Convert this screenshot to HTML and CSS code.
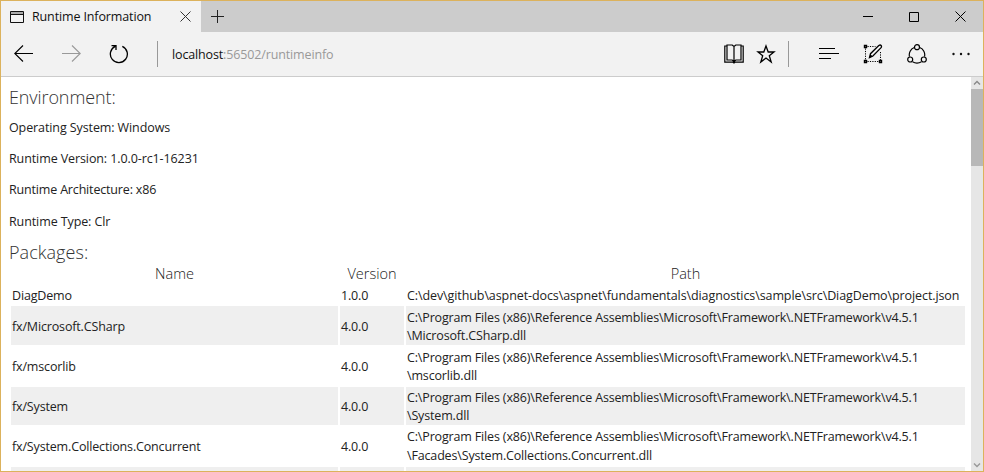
FILE: index.html
```html
<!DOCTYPE html>
<html lang="en">
<head>
<meta charset="utf-8">
<title>Runtime Information</title>
<link rel="stylesheet" href="styles.css">
</head>
<body>
<div class="window">
  <header class="titlebar">
    <div class="tab">
      <svg class="page-icon" width="14" height="12" viewBox="0 0 14 12"><path d="M1 1h12v2H1z" fill="#aaa"/><path d="M.5 .5h13v11H.5zM.5 3.5h13" fill="none" stroke="#111"/></svg>
      <span class="tab-title">Runtime Information</span>
      <svg class="tab-close" width="11" height="11" viewBox="0 0 11 11"><path d="M.5.5l10 10M10.5.5l-10 10" stroke="#333" stroke-width="1"/></svg>
    </div>
    <svg class="new-tab" width="13" height="13" viewBox="0 0 13 13"><path d="M6.5 0v13M0 6.5h13" stroke="#222"/></svg>
    <div class="controls">
      <svg width="10" height="11" viewBox="0 0 10 11"><path d="M0 5.5h10" stroke="#000"/></svg>
      <svg width="10" height="10" viewBox="0 0 10 10"><path d="M.5.5h9v9h-9z" fill="none" stroke="#000"/></svg>
      <svg width="11" height="11" viewBox="0 0 11 11"><path d="M.5.5l10 10M10.5.5l-10 10" stroke="#000" stroke-width="1"/></svg>
    </div>
  </header>
  <nav class="toolbar">
    <svg class="back" width="19" height="18" viewBox="0 0 19 18"><path d="M9 .5L.8 8.500 9 16.500M.8 8.500H19" fill="none" stroke="#000" stroke-width="1.1"/></svg>
    <svg class="forward" width="19" height="18" viewBox="0 0 19 18"><path d="M10 .5l8.200 8L10 16.500M18.200 8.500H0" fill="none" stroke="#999" stroke-width="1.1"/></svg>
    <svg class="reload" width="20" height="20" viewBox="0 0 20 20"><path d="M13.300 2.300A8.500 8.500 0 1 1 6.200 2.400M2.500 1.600H7v4.500" fill="none" stroke="#000" stroke-width="1.3"/></svg>
    <i class="rule"></i>
    <span class="address">localhost<span class="rest">:56502/runtimeinfo</span></span>
    <div class="tools">
      <svg class="book" width="20" height="20" viewBox="0 0 20 20"><path d="M3 2H.8v16.200H9l1 .8 1-.8h8.200V2H17M3 16V1h5.200L10 2.500 11.800 1H17v15h-5.200L10 17.500 8.200 16zM10 2.500v15" fill="none" stroke="#000" stroke-width="1.2"/></svg>
      <svg class="star" width="20" height="20" viewBox="0 0 20 20"><path d="M10 2l2.200 6H18l-4.700 3.700 1.900 6.300-5.200-3.900L4.800 18l1.900-6.300L2 8h5.800z" fill="none" stroke="#000" stroke-width="1.3"/></svg>
      <i class="rule"></i>
      <svg class="hub" width="20" height="12" viewBox="0 0 20 12"><path d="M0 .5h16M0 5.500h20M0 10.500h12" stroke="#000" stroke-width="1"/></svg>
      <svg class="note" width="20" height="20" viewBox="0 0 20 20"><path d="M4.500 2.500h8M2.500 4.500v12M4.500 17.500h12M17.500 8v8" fill="none" stroke="#000" stroke-width="1" stroke-dasharray="1.200 1.200"/><path d="M1.500 1.500h2v2h-2zM1.500 16.500h2v2h-2zM16.500 16.500h2v2h-2z" fill="none" stroke="#000" stroke-width="1.400"/><path d="M6.500 13.500l1-3.800L15.800 1.500q1.500-1 2.300 0t0 2.200L9.900 12z" fill="#f2f2f2" stroke="#000" stroke-width="1.300"/><path d="M6.300 13.700l1-3.500 2.500 2.300z"/></svg>
      <svg class="share" width="20" height="20" viewBox="0 0 20 20"><g fill="none" stroke="#000" stroke-width="1.200"><path d="M7.300 3.500A7.800 7.800 0 0 0 2.500 12.700M12.700 3.500a7.800 7.800 0 0 1 4.800 9.200M5.500 17.700q4.500 2.700 9 0"/><circle cx="10" cy="3.200" r="2.500"/><circle cx="3.200" cy="15.500" r="2.500"/><circle cx="16.800" cy="15.500" r="2.500"/></g></svg>
      <svg class="more" width="18" height="4" viewBox="0 0 18 4"><g fill="#111"><circle cx="1.500" cy="2" r="1.200"/><circle cx="9" cy="2" r="1.200"/><circle cx="16.500" cy="2" r="1.200"/></g></svg>
    </div>
  </nav>
  <div class="view">
    <main class="page">
      <h2>Environment:</h2>
      <p>Operating System: Windows</p>
      <p>Runtime Version: 1.0.0-rc1-16231</p>
      <p class="arch">Runtime Architecture: x86</p>
      <p class="type">Runtime Type: Clr</p>
      <h2 class="packages">Packages:</h2>
      <table>
        <colgroup><col class="c-name"><col class="c-version"><col class="c-path"></colgroup>
        <thead><tr><th>Name</th><th>Version</th><th>Path</th></tr></thead>
        <tbody>
          <tr class="single"><td>DiagDemo</td><td>1.0.0</td><td class="long">C:\dev\github\aspnet-docs\aspnet\fundamentals\diagnostics\sample\src\DiagDemo\project.json</td></tr>
          <tr class="first"><td>fx/Microsoft.CSharp</td><td>4.0.0</td><td>C:\Program Files (x86)\Reference Assemblies\Microsoft\Framework\.NETFramework\v4.5.1<br>\Microsoft.CSharp.dll</td></tr>
          <tr><td>fx/mscorlib</td><td>4.0.0</td><td>C:\Program Files (x86)\Reference Assemblies\Microsoft\Framework\.NETFramework\v4.5.1<br>\mscorlib.dll</td></tr>
          <tr><td>fx/System</td><td>4.0.0</td><td>C:\Program Files (x86)\Reference Assemblies\Microsoft\Framework\.NETFramework\v4.5.1<br>\System.dll</td></tr>
          <tr class="spaced"><td>fx/System.Collections.Concurrent</td><td>4.0.0</td><td>C:\Program Files (x86)\Reference Assemblies\Microsoft\Framework\.NETFramework\v4.5.1<br>\Facades\System.Collections.Concurrent.dll</td></tr>
          <tr><td></td><td></td><td></td></tr>
        </tbody>
      </table>
    </main>
    <div class="scrollbar">
      <svg width="12" height="12" viewBox="0 0 12 12"><path d="M3 7.500l3-3 3 3" fill="none" stroke="#888" stroke-width="1.400"/></svg>
      <div class="thumb"></div>
      <svg class="down" width="12" height="12" viewBox="0 0 12 12"><path d="M3 4.500l3 3 3-3" fill="none" stroke="#999" stroke-width="1.400"/></svg>
    </div>
  </div>
</div>
</body>
</html>
```
FILE: styles.css
```css
* { box-sizing: border-box; }
body { margin: 0; overflow: hidden; font-family: "Open Sans", "Noto Sans", sans-serif; font-size: 12.5px; color: #222; }
svg { display: block; flex: none; }
.window { width: 984px; height: 472px; border: 1px solid #dcb25c; display: flex; flex-direction: column; background: #fff; }
.titlebar { height: 31px; flex: none; background: #ccc; display: flex; align-items: center; }
.tab { width: 200px; height: 31px; background: #f2f2f2; display: flex; align-items: center; padding: 0 10px 0 9px; }
.tab-title { margin-left: 8px; flex: 1; color: #111; white-space: nowrap; letter-spacing: -0.13px; }
.new-tab { margin-left: 10px; }
.controls { margin-left: auto; display: flex; gap: 36px; align-items: center; padding-right: 17px; }
.toolbar { height: 45px; flex: none; background: #f2f2f2; border-bottom: 1px solid #ccc; display: flex; align-items: center; padding-left: 13px; }
.forward { margin-left: 29px; }
.reload { margin-left: 28px; }
.rule { width: 1px; height: 26px; background: #999; }
.toolbar > .rule { margin-left: 28px; }
.address { margin-left: 14px; color: #111; letter-spacing: -0.14px; }
.rest { color: #999; }
.tools { margin-left: auto; display: flex; align-items: center; padding-right: 13px; }
.star { margin-left: 12px; }
.tools .rule { margin-left: 12px; }
.hub { margin-left: 30px; }
.note { margin-left: 24px; }
.share { margin-left: 24px; }
.more { margin-left: 25px; }
.view { flex: 1; min-height: 0; display: flex; overflow: hidden; }
.page { flex: 1; padding: 8px 0 0 8px; overflow: hidden; }
h2 { margin: 0; font-size: 18px; line-height: 24px; font-weight: 300; color: #333; letter-spacing: -0.1px; }
p { margin: 9px 0 0; line-height: 18px; height: 22px; letter-spacing: -0.1px; }
h2 + p { margin-top: 10px; }
.arch { letter-spacing: -0.17px; }
.type { margin-top: 10px; }
.packages { margin-top: 5px; letter-spacing: 0.05px; }
table { table-layout: fixed; width: 958px; border-spacing: 2px; border-collapse: separate; margin-top: -2px; }
.c-name { width: 327px; }
.c-version { width: 64px; }
.c-path { width: 559px; }
th { padding: 0; height: 20px; line-height: 20px; font-size: 14.500px; font-weight: 300; color: #222; }
td { padding: 1px 1px 0; height: 38px; line-height: 18px; white-space: nowrap; letter-spacing: -0.157px; }
.single td { height: 18px; line-height: 16px; padding: 2px 1px 0; }
.single .long { letter-spacing: -0.095px; }
.first td { height: 39px; padding-top: 3px; }
.spaced td { padding-top: 2px; }
.spaced td:last-child { padding-top: 0; line-height: 19px; }
tbody tr:nth-child(even) td { background: #efefef; }
.scrollbar { width: 12px; background: #e6e6e6; display: flex; flex-direction: column; }
.thumb { height: 77px; background: #b8b8b8; }
.down { margin-top: auto; }
```
